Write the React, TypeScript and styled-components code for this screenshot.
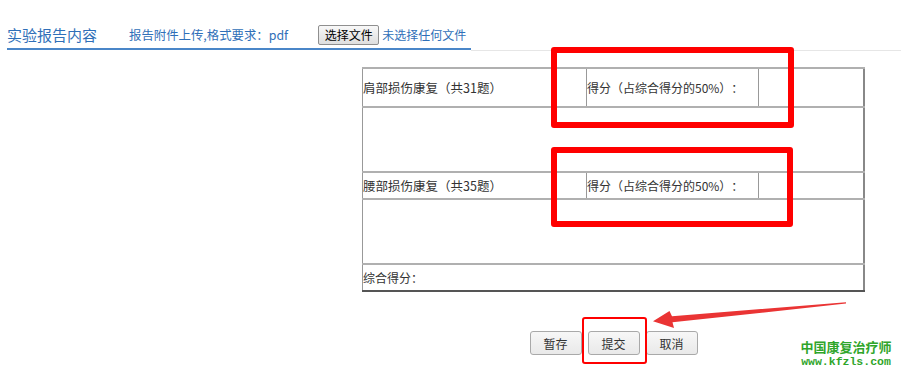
import React from "react";
import styled, { createGlobalStyle } from "styled-components";

const Global = createGlobalStyle`
  html, body { margin: 0; padding: 0; background: #fff; }
  body {
    font-family: "Noto Sans CJK SC", "Noto Sans", sans-serif;
    color: #333;
    text-spacing-trim: space-all;
    font-feature-settings: "chws" 0, "halt" 0;
  }
`;

const Page = styled.div`
  position: relative;
  width: 901px;
  height: 374px;
  overflow: hidden;
  background: #fff;
`;

const HeaderBar = styled.div`
  display: flex;
  align-items: flex-start;
`;

const Tab = styled.div`
  box-sizing: border-box;
  margin-left: 7px;
  width: 464px;
  height: 50px;
  padding-top: 22px;
  display: flex;
  align-items: center;
  border-bottom: 2px solid #4a86c8;
  color: #2f6fb8;
`;

const Filler = styled.div`
  flex: 1;
  height: 50px;
  border-bottom: 1px solid #e6e6e6;
`;

const Title = styled.span`
  font-size: 15px;
  line-height: 20px;
  white-space: nowrap;
`;

const Label = styled.span`
  margin-left: 32px;
  font-size: 12.4px;
  line-height: 20px;
  white-space: nowrap;
`;

const FileButton = styled.button`
  box-sizing: border-box;
  margin-left: 30px;
  width: 61px;
  height: 20px;
  padding: 0;
  font-family: inherit;
  font-size: 12px;
  line-height: 18px;
  color: #000;
  border: 1px solid #8f8f8f;
  border-radius: 2px;
  background: linear-gradient(#f8f8f8, #dedede);
`;

const FileStatus = styled.span`
  margin-left: 3px;
  font-size: 12px;
  line-height: 20px;
  white-space: nowrap;
`;

const Content = styled.div`
  margin-left: 362px;
  width: 503px;
`;

const Table = styled.table`
  margin-top: 16px;
  width: 503px;
  border-collapse: collapse;
  border-top: 1px solid #555;
  border-left: 1px solid #666;
  border-right: 2px solid #888;
  border-bottom: 2px solid #555;
  table-layout: fixed;
  font-size: 12px;
  color: #333;
`;

const Td = styled.td<{ $h: number; $wide?: boolean }>`
  height: ${(p) => p.$h}px;
  padding: 0;
  border-top: 2px solid #b0b0b0;
  border-left: 1px solid #999;
  vertical-align: middle;
  white-space: nowrap;
  line-height: 16px;
  font-size: ${(p) => (p.$wide ? "12.5px" : "12px")};
`;

const ButtonRow = styled.div`
  margin-top: 39px;
  display: flex;
  justify-content: center;
  gap: 6px;
`;

const ActionButton = styled.button`
  box-sizing: border-box;
  width: 52px;
  height: 24px;
  padding: 0;
  font-family: inherit;
  font-size: 12px;
  color: #333;
  border: 1px solid #a9a9a9;
  border-radius: 3px;
  background: linear-gradient(#f7f7f7, #e9e9e9);
`;

const Highlight = styled.div<{ $x: number; $y: number; $w: number; $h: number; $t: number }>`
  position: absolute;
  box-sizing: border-box;
  left: ${(p) => p.$x}px;
  top: ${(p) => p.$y}px;
  width: ${(p) => p.$w}px;
  height: ${(p) => p.$h}px;
  border: ${(p) => p.$t}px solid #ff0000;
  border-radius: 3px;
  pointer-events: none;
`;

const ArrowSvg = styled.svg`
  position: absolute;
  left: 0;
  top: 0;
  pointer-events: none;
`;

const Watermark = styled.div`
  position: absolute;
  left: 800px;
  top: 339px;
  color: #2fa52a;
  font-weight: bold;
  text-align: center;
  width: 92px;
`;

const WmCn = styled.div`
  font-size: 13px;
  line-height: 16px;
  white-space: nowrap;
`;

const WmUrl = styled.div`
  font-family: "Liberation Mono", "DejaVu Sans Mono", monospace;
  font-size: 11.5px;
  line-height: 13px;
  white-space: nowrap;
`;

export default function App() {
  return (
    <Page>
      <Global />
      <HeaderBar>
        <Tab>
          <Title>实验报告内容</Title>
          <Label>报告附件上传,格式要求：pdf</Label>
          <FileButton>选择文件</FileButton>
          <FileStatus>未选择任何文件</FileStatus>
        </Tab>
        <Filler />
      </HeaderBar>
      <Content>
        <Table>
          <colgroup>
            <col style={{ width: 224 }} />
            <col style={{ width: 172 }} />
            <col />
          </colgroup>
          <tbody>
            <tr>
              <Td $h={37} $wide>肩部损伤康复（共31题）</Td>
              <Td $h={37}>得分（占综合得分的50%）：</Td>
              <Td $h={37}></Td>
            </tr>
            <tr>
              <Td $h={63} colSpan={3}></Td>
            </tr>
            <tr>
              <Td $h={25} $wide>腰部损伤康复（共35题）</Td>
              <Td $h={25}>得分（占综合得分的50%）：</Td>
              <Td $h={25}></Td>
            </tr>
            <tr>
              <Td $h={63} colSpan={3}></Td>
            </tr>
            <tr>
              <Td $h={25} colSpan={3}>综合得分：</Td>
            </tr>
          </tbody>
        </Table>
        <ButtonRow>
          <ActionButton>暂存</ActionButton>
          <ActionButton>提交</ActionButton>
          <ActionButton>取消</ActionButton>
        </ButtonRow>
      </Content>

      <Highlight $x={551} $y={47} $w={243} $h={81} $t={6} />
      <Highlight $x={551} $y={147} $w={242} $h={80} $t={6} />
      <Highlight $x={582} $y={317} $w={65} $h={47} $t={2} />

      <ArrowSvg width="901" height="374" viewBox="0 0 901 374">
        <polygon
          points="846,302.2 672,316.2 669.5,311 653,321.2 674,328 672.5,322.3 846,303.6"
          fill="#ea3434"
        />
      </ArrowSvg>

      <Watermark>
        <WmCn>中国康复治疗师</WmCn>
        <WmUrl>www.kfzls.com</WmUrl>
      </Watermark>
    </Page>
  );
}
